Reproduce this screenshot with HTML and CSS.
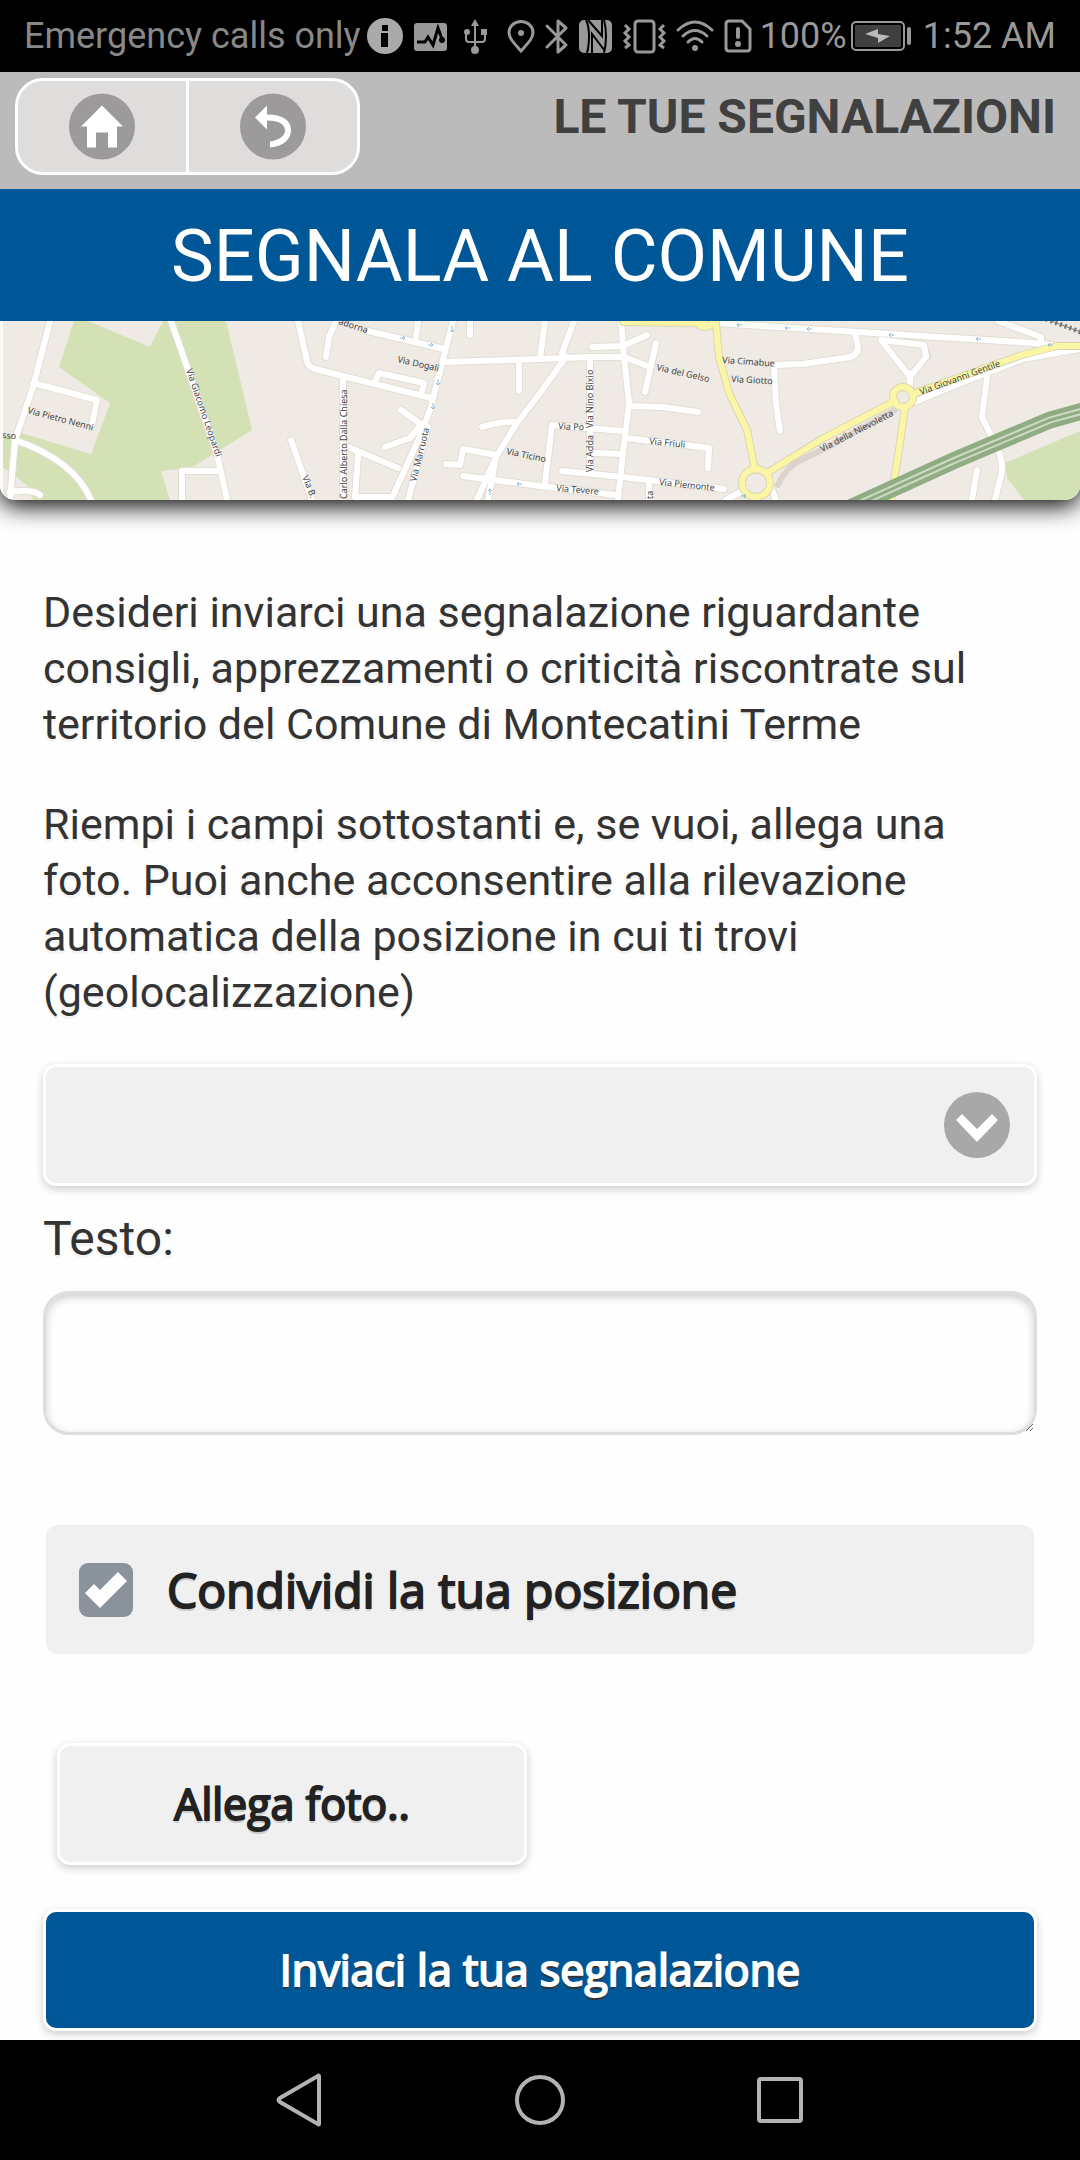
FILE: index.html
```
<!DOCTYPE html>
<html lang="it">
<head>
    <meta charset="utf-8">
    <title>Segnala al Comune</title>
    <link rel="stylesheet" href="styles.css">
</head>
<body>
    <div class="status-bar">
        <span class="carrier">Emergency calls only</span>
        <svg class="status-icons" viewBox="0 0 390 72" aria-hidden="true">
            <!-- info -->
            <circle cx="18" cy="36" r="18" fill="#aaa"/>
            <path d="M15 25h6v6h-6zM14 33h7v14h-7z" fill="#000"/>
            <!-- activity -->
            <rect x="47" y="23" width="33" height="28" rx="3" fill="#999"/>
            <path d="M50 42h8l3-5 5 8 5-17 4 11" fill="none" stroke="#000" stroke-width="3"/>
            <circle cx="75" cy="40" r="3" fill="#000"/>
            <!-- usb -->
            <path d="M108 22v30M99 33v6q0 3 3 3h13q3 0 3-3v-6" fill="none" stroke="#999" stroke-width="2"/>
            <path d="M108 19l4 7h-8z" fill="#999"/>
            <circle cx="108" cy="50" r="4" fill="#999"/>
            <circle cx="100" cy="32" r="3" fill="#999"/>
            <rect x="114" y="29" width="6" height="6" fill="#999"/>
            <!-- location -->
            <path d="M154 51C146 42 142 38 142 32.500a12 11 0 0 1 24 0C166 38 162 42 154 51z" fill="none" stroke="#999" stroke-width="3"/>
            <circle cx="154" cy="33" r="3" fill="#999"/>
            <!-- bluetooth -->
            <path d="M180 26l19 19-8 7V21l8 7-19 19" fill="none" stroke="#999" stroke-width="3" stroke-linejoin="round" stroke-linecap="round"/>
            <!-- nfc -->
            <rect x="212" y="20" width="33" height="33" rx="5" fill="#999"/>
            <path d="M219 20q3 6 3 16t-2 17M237 20q2 7 2 16t-2 17" fill="none" stroke="#000" stroke-width="2"/>
            <path d="M221 20l14 16V20M225 53V34l13 17" fill="none" stroke="#000" stroke-width="2"/>
            <!-- vibrate -->
            <rect x="268" y="21" width="19" height="31" rx="3" fill="none" stroke="#999" stroke-width="3"/>
            <path d="M258 25l4 4-4 4 4 4-4 4 4 4-4 3M297 25l-4 4 4 4-4 4 4 4-4 4 4 3" fill="none" stroke="#999" stroke-width="3"/>
            <!-- wifi -->
            <path d="M311 30q17-16 34 0M316 36q12-11 24 0M321 42q7-7 14 0" fill="none" stroke="#999" stroke-width="3" stroke-linecap="round"/>
            <circle cx="328" cy="48" r="3" fill="#999"/>
            <!-- sim -->
            <path d="M362 21h13l8 8v19q0 3-3 3h-18q-3 0-3-3V24q0-3 3-3z" fill="none" stroke="#999" stroke-width="3"/>
            <path d="M371 29v8" stroke="#999" stroke-width="4" stroke-linecap="round"/>
            <circle cx="371" cy="44" r="3" fill="#999"/>
        </svg>
        <span class="percent">100%</span>
        <svg class="battery" viewBox="0 0 62 30" aria-hidden="true">
            <rect x="1" y="1" width="52" height="28" rx="4" fill="none" stroke="#999" stroke-width="2"/>
            <rect x="4" y="4" width="46" height="22" fill="#3f3f3f"/>
            <path d="M14 13l13-5v5l12 2-12 7v-5z" fill="#bbb"/>
            <rect x="56" y="6" width="4" height="18" rx="2" fill="#999"/>
        </svg>
        <span class="clock">1:52 AM</span>
    </div>

    <header class="header">
        <nav class="nav-group">
            <a href="#" class="nav-button" aria-label="Home">
                <svg viewBox="0 0 66 66" aria-hidden="true">
                    <circle cx="33" cy="33" r="33" fill="#9c9a9a"/>
                    <path d="M33 12l21 21h-6v21h-9V39H27v15h-9V33h-6z" fill="#fff"/>
                </svg>
            </a>
            <a href="#" class="nav-button" aria-label="Indietro">
                <svg viewBox="0 0 66 66" aria-hidden="true">
                    <circle cx="33" cy="33" r="33" fill="#9c9a9a"/>
                    <path d="M15 24l12-12v9c16 0 24 6 24 16 0 9-8 16-21 17v-6c10-2 15-6 15-11 0-6-6-10-18-10v9z" fill="#fff"/>
                </svg>
            </a>
        </nav>
        <h1>LE TUE SEGNALAZIONI</h1>
    </header>

    <h2 class="title">SEGNALA AL COMUNE</h2>

    <div class="map">
        <svg viewBox="0 0 1080 179" role="img" aria-label="Mappa">
            <rect width="1080" height="179" fill="#efebe4"/>
            <g fill="#d3e1b5">
                <path d="M74 0L59 46l51 36-19 51-70-21-18 4v30l26 20 4 13h137l-9-29 30-3 61-38L226 0h-63l-13 26L88 0z"/>
                <path d="M1005 142l75-32v69h-56l-17-22z"/>
            </g>
            <path class="lane" d="M778 164q5-12 17-22l31-15 69-38M924 24l4 12"/>
            <!-- streets: casing first, then the white fill on top -->
            <g class="street-case">
                <g id="streets">
                    <path d="M50 0L33 66 15 119 10 179M33 62l64 17-5 24M15 119Q75 140 91 179M9 171q25-3 31 3"/>
                    <path d="M171 0l17 49 29 84 10 46M182 179v-29h38"/>
                    <path d="M298 0l9 40q1 6 8 8l116 29M336 0l-7 16-3 20M368 10l76 18M418 0l-2 16M453 0l-23 89-10 26-29 64M470 0v14"/>
                    <path d="M444 41l96-3 48-2h36l26 10M519 41v29M375 61l4-9 45 10-2 8M343 59v120M401 89l21 15M385 126l25-9 10-12"/>
                    <path d="M348 126l50 21M358 134l-3 42h34M291 119l21 60M428 106l-20 73M482 106q18-6 35-5M446 143l14 1 3-16 33 6M463 155l77 10 76 9"/>
                    <path d="M574 0l-12 32 4 4-26 36-23 30-21 34-19 43M496 136l-8 43M545 0l-5 38"/>
                    <path d="M621 0l3 36 5 46-6 50-5 47M592 26l31-1 24-11M656 22l-11 49M630 85l32 1 36 5M590 39v110M545 162l7-58 71 6"/>
                    <path d="M626 117l83 10-1 20M595 132l28 1M562 150l61 6 101 12M649 162v17"/>
                    <path d="M716 2l316 20 20 2M855 12l3 14q0 10-14 11l-41 6-29 1 2 38 4 28M881 19l43 5 2 12-16 20-29-37M910 52v14M998 0l43 16v8"/>
                    <path d="M915 81q35-15 69-28t38-15l58-10M987 56l-5 40 15 30q9 20 2 36l-4 17M977 149l-5 30M746 168l-20 11M771 166l5 13"/>
                </g>
            </g>
            <use href="#streets" class="street-fill"/>
            <g class="main-case">
                <g id="main-roads">
                    <path d="M623 1l82 1M716 2l3 34 10 36 18 37 8 40M767 152l55-34 73-38M915 72l107-38 35-9h23M905 86l-5 36-9 57"/>
                    <circle cx="705" cy="-3" r="9"/>
                    <circle cx="756" cy="162" r="14"/>
                    <circle cx="903" cy="76" r="10"/>
                </g>
            </g>
            <use href="#main-roads" class="main-fill"/>
            <!-- motorway -->
            <g fill="none">
                <path d="M850 187l103-47 97-41 40-11" stroke="#8fac82" stroke-width="17"/>
                <path d="M850 187l103-47 97-41 40-11" stroke="#cddac4" stroke-width="7"/>
                <path d="M850 187l103-47 97-41 40-11" stroke="#8fac82" stroke-width="3"/>
                <path d="M1046-2l40 15" stroke="#777" stroke-width="5" stroke-dasharray="2 3"/>
                <path d="M1046-2l40 15" stroke="#777"/>
            </g>
            <!-- one way arrows -->
            <g class="arrows">
                <path d="M400 17h5l-2-2m2 2l-2 2M428 24h5l-2-2m2 2l-2 2M452 5v6l-2-2m2 2l2-2M438 58v6l-2-2m2 2l2-2M433 82v6l-2-2m2 2l2-2M522 163h-5l2-2m-2 2l2 2M490 174v-6l-2 2m2-2l2 2"/>
                <path d="M742 4h-5l2-2m-2 2l2 2M790 7h-5l2-2m-2 2l2 2M812 8h-5l2-2m-2 2l2 2M894 14h-5l2-2m-2 2l2 2M981 18h-5l2-2m-2 2l2 2M1053 24h-5l2-2m-2 2l2 2M741 175h5l-2-2m2 2l-2 2"/>
            </g>
            <g class="street-names">
                <text transform="translate(27 92) rotate(15)">Via Pietro Nenni</text>
                <text transform="translate(2 117) rotate(5)">sso</text>
                <text transform="translate(186 49) rotate(71)">Via Giacomo Leopardi</text>
                <text transform="translate(338 3) rotate(18)">adorna</text>
                <text transform="translate(397 41) rotate(13)">Via Dogali</text>
                <text transform="translate(347 178) rotate(-90)">Carlo Alberto Dalla Chiesa</text>
                <text transform="translate(416 161) rotate(-76)">Via Marruota</text>
                <text transform="translate(302 156) rotate(68)">Via B.</text>
                <text transform="translate(506 133) rotate(12)">Via Ticino</text>
                <text transform="translate(558 108) rotate(3)">Via Po</text>
                <text transform="translate(593 107) rotate(-90)">Via Nino Bixio</text>
                <text transform="translate(593 151) rotate(-90)">Via Adda</text>
                <text transform="translate(556 170) rotate(5)">Via Tevere</text>
                <text transform="translate(649 123) rotate(6)">Via Friuli</text>
                <text transform="translate(659 164) rotate(6)">Via Piemonte</text>
                <text transform="translate(653 178) rotate(-90)">ta</text>
                <text transform="translate(656 49) rotate(13)">Via del Gelso</text>
                <text transform="translate(722 42) rotate(4)">Via Cimabue</text>
                <text transform="translate(731 61) rotate(3)">Via Giotto</text>
                <text transform="translate(822 131) rotate(-27)">Via della Nievoletta</text>
                <text transform="translate(921 74) rotate(-20)">Via Giovanni Gentile</text>
            </g>
            <path d="M0 0h3v179H0z" fill="#fff" opacity=".8"/>
        </svg>
    </div>

    <main class="content">
        <p>Desideri inviarci una segnalazione riguardante consigli, apprezzamenti o criticità riscontrate sul territorio del Comune di Montecatini Terme</p>
        <p>Riempi i campi sottostanti e, se vuoi, allega una foto. Puoi anche acconsentire alla rilevazione automatica della posizione in cui ti trovi (geolocalizzazione)</p>

        <form class="report-form">
            <div class="select-box">
                <select name="categoria" aria-label="Categoria">
                    <option value=""></option>
                </select>
                <svg viewBox="0 0 66 66" aria-hidden="true">
                    <circle cx="33" cy="33" r="33" fill="#a8a8a8"/>
                    <path d="M18 22l15 15 15-15 6 6-21 22-21-22z" fill="#fff"/>
                </svg>
            </div>

            <label class="text-label" for="testo">Testo:</label>
            <textarea id="testo" name="testo"></textarea>

            <label class="check-row" for="posizione">
                <input type="checkbox" id="posizione" name="posizione" checked>
                Condividi la tua posizione
            </label>

            <button type="button" class="button photo">Allega foto..</button>
            <button type="submit" class="button send">Inviaci la tua segnalazione</button>
        </form>
    </main>

    <div class="system-nav">
        <button type="button" aria-label="Back">
            <svg viewBox="0 0 56 56" aria-hidden="true"><path d="M47 4v48q0 1-1 0L8 30q-3-2 0-4L46 4q1-1 1 0z"/></svg>
        </button>
        <button type="button" aria-label="Home">
            <svg viewBox="0 0 56 56" aria-hidden="true"><circle cx="28" cy="28" r="23"/></svg>
        </button>
        <button type="button" aria-label="Recent apps">
            <svg viewBox="0 0 56 56" aria-hidden="true"><rect x="7" y="7" width="42" height="42" rx="2"/></svg>
        </button>
    </div>
</body>
</html>
```
FILE: styles.css
```
* {
    box-sizing: border-box;
}
body {
    margin: 0;
    min-height: 100vh;
    display: flex;
    flex-direction: column;
    background-color: #fefefe;
    color: #333;
    font-family: Roboto, sans-serif;
}

/* phone status bar */
.status-bar {
    display: flex;
    align-items: center;
    height: 72px;
    padding: 0 24px;
    background-color: #000;
    color: #999;
    font-size: 36px;
    line-height: 44px;
    white-space: nowrap;
}
.carrier {
    color: #888;
}
.status-icons {
    width: 390px;
    height: 72px;
    margin: 0 3px 0 6px;
}
.battery {
    width: 62px;
    height: 30px;
    margin-left: auto;
}
.clock {
    margin-left: 10px;
}

.header {
    display: flex;
    justify-content: space-between;
    align-items: flex-start;
    padding: 6px 24px 14px 15px;
    background-color: #bbb;
}
.nav-group {
    display: flex;
    border: 3px solid #fff;
    border-radius: 28px;
    background-color: #dfdcdc;
}
.nav-button {
    display: flex;
    padding: 12px 51px;
}
.nav-button + .nav-button {
    border-left: 3px solid #fff;
}
.nav-button svg {
    width: 66px;
    height: 67px;
}
.header h1 {
    margin: 11px 0 0;
    color: #404040;
    font-size: 48px;
    line-height: 56px;
}
.title {
    /* keeps the map shadow off the bar */
    position: relative;
    z-index: 1;
    margin: 0;
    padding-top: 4px;
    background-color: #005797;
    color: #fff;
    font-size: 72px;
    font-weight: 400;
    line-height: 128px;
    text-align: center;
}

/* map banner */
.map {
    border-radius: 0 0 15px 15px;
    box-shadow: 0 6px 24px #000;
    overflow: hidden;
}
.map svg {
    display: block;
    width: 100%;
    height: auto;
}
.street-case,
.street-fill,
.main-case,
.main-fill,
.lane {
    fill: none;
    stroke-linecap: round;
    stroke-linejoin: round;
}
.street-case {
    stroke: #e2ddd5;
    stroke-width: 8px;
}
.street-fill {
    stroke: #fff;
    stroke-width: 6px;
}
.lane {
    stroke: #dcd3cc;
    stroke-width: 6px;
}
.main-case {
    stroke: #dcd6b4;
    stroke-width: 8px;
}
.main-fill {
    stroke: #fbf5a6;
    stroke-width: 6px;
}
.arrows {
    fill: none;
    stroke: #8bb8dc;
}
.street-names {
    fill: #444;
    font-family: "Noto Sans", sans-serif;
    font-size: 9px;
}

.content {
    padding: 84px 43px 9px;
}
.content p {
    margin: 0 0 44px;
    font-size: 43px;
    line-height: 56px;
    text-shadow: 0 3px 0 #f3f3f3;
}
.report-form {
    display: flex;
    flex-direction: column;
}
.select-box {
    position: relative;
    display: flex;
}
.select-box select {
    flex: 1;
    height: 122px;
    padding: 0 110px 0 24px;
    appearance: none;
    font-family: inherit;
    font-size: 43px;
}
.select-box svg {
    position: absolute;
    top: 28px;
    right: 27px;
    width: 66px;
    height: 66px;
    pointer-events: none;
}
.select-box select,
.button {
    border: 3px solid #fff;
    border-radius: 13px;
    background-color: #f0f0f0;
    box-shadow: 0 3px 9px rgba(0, 0, 0, 0.2);
}
.text-label {
    margin: 25px 0 24px;
    font-size: 48px;
    line-height: 56px;
    text-shadow: 0 3px 0 #f3f3f3;
}
textarea {
    height: 144px;
    padding: 18px;
    border: 3px solid #ddd;
    border-radius: 26px;
    background-color: #fefefe;
    box-shadow: inset 0 3px 9px rgba(0, 0, 0, 0.2);
    font-family: inherit;
    font-size: 43px;
    resize: vertical;
}
.check-row,
.button {
    color: #222;
    font-family: "Open Sans", sans-serif;
    text-shadow: 0 3px 0 #ccc;
    -webkit-text-stroke: 2px;
}
.check-row {
    display: flex;
    align-items: center;
    gap: 34px;
    height: 129px;
    margin: 90px 3px 89px;
    padding: 0 33px;
    border-radius: 12px;
    background-color: #f0f0f0;
    font-size: 48px;
}
.check-row input {
    width: 54px;
    height: 54px;
    margin: 0;
    appearance: none;
    border-radius: 9px;
}
.check-row input:checked {
    background: #8a929c url("data:image/svg+xml,%3Csvg xmlns='http://www.w3.org/2000/svg' viewBox='0 0 54 54'%3E%3Cpath d='M6 30l9-9 6 6L39 9l9 9-27 27z' fill='%23fff'/%3E%3C/svg%3E");
}
.button {
    height: 122px;
    padding: 0 24px 2px;
    font-size: 43px;
    cursor: pointer;
}
.photo {
    align-self: flex-start;
    width: 470px;
    max-width: 100%;
    margin: 0 14px 44px;
}
.send {
    background-color: #005797;
    color: #fff;
    text-shadow: 0 3px 0 #333;
}

/* phone navigation keys */
.system-nav {
    display: flex;
    justify-content: center;
    align-items: center;
    gap: 184px;
    height: 120px;
    margin-top: auto;
    background-color: #000;
}
.system-nav button {
    padding: 0;
    border: none;
    background: none;
}
.system-nav svg {
    display: block;
    width: 56px;
    height: 56px;
    fill: none;
    stroke: #b3b3b3;
    stroke-width: 4px;
}
```
